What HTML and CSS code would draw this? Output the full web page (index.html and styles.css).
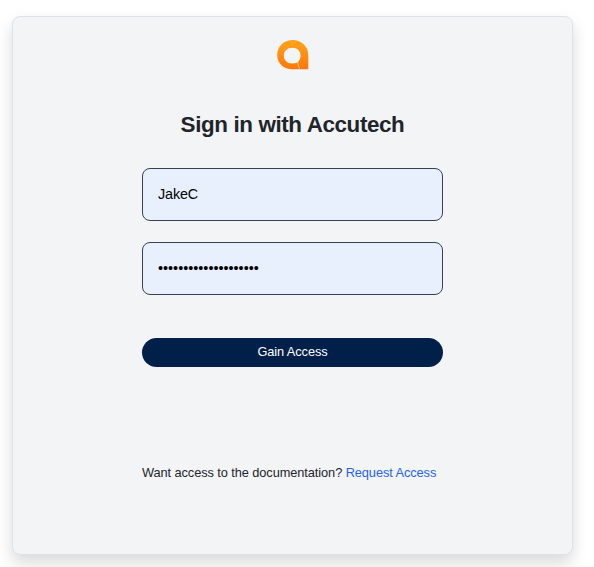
FILE: index.html
```html
<!DOCTYPE html>
<html lang="en">
<head>
<meta charset="utf-8">
<title>Sign in with Accutech</title>
<link rel="stylesheet" href="styles.css">
</head>
<body>
<main class="card">
  <svg class="logo" viewBox="0 0 32 30" role="img" aria-label="Accutech">
    <defs>
      <linearGradient id="flame" x1="0" y1="0" x2="0" y2="1">
        <stop offset="0" stop-color="#ffa51c"/>
        <stop offset="1" stop-color="#ff7608"/>
      </linearGradient>
    </defs>
    <path fill="url(#flame)" d="M15.500 0C6.800 0 .2 6.500 .2 15S6.700 29.300 15.500 29.300H31.300V15C31.300 6.300 24.200 0 15.500 0ZM15.300 7.800C20.200 7.800 23.600 11 23.600 15.500C23.600 18.500 22.500 20.500 21 22L21.400 23.200L20.200 22.600C18.800 23.200 17.200 23.600 15.400 23.600C10.300 23.600 6.800 20.200 6.800 15.600S10.300 7.800 15.300 7.800Z" fill-rule="evenodd"/>
    <path class="logo-slit" d="M20.700 22.500L22.500 29.300"/>
  </svg>
  <h1 class="title">Sign in with Accutech</h1>
  <form class="form">
    <input class="field" type="text" value="JakeC" aria-label="Username">
    <input class="field" type="password" value="aaaaaaaaaaaaaaaaaaaa" aria-label="Password">
    <button class="submit" type="button">Gain Access</button>
  </form>
  <p class="request">Want access to the documentation? <a class="link" href="#">Request Access</a></p>
</main>
</body>
</html>
```
FILE: styles.css
```css
* {
  box-sizing: border-box;
}

body {
  margin: 0;
  padding: 16px 21px 0 12px;
  height: 567px;
  overflow: hidden;
  background: #fff;
  color: #212529;
  font-family: "Liberation Sans", Arial, sans-serif;
}

.card {
  display: flex;
  flex-direction: column;
  align-items: center;
  height: 539px;
  padding-top: 23px;
  border: 1px solid #dee2e6;
  border-radius: 8px;
  background: #f3f4f6;
  box-shadow: 0 8px 16px rgba(0, 0, 0, 0.15);
}

.logo {
  width: 32px;
  height: 30px;
}

.logo-slit {
  stroke: #ffd9b0;
  stroke-width: 0.8;
}

.title {
  margin: 41px 0 0;
  font-size: 22.4px;
  line-height: 28px;
  font-weight: 700;
  letter-spacing: -0.38px;
}

.form {
  display: flex;
  flex-direction: column;
  width: 301px;
  margin-top: 29px;
}

.field {
  height: 53px;
  margin: 0 0 21px;
  padding: 0 15px 2px;
  border: 1px solid #374151;
  border-radius: 8px;
  background: #e8f0fe;
  color: #000;
  font-family: inherit;
  font-size: 14.4px;
}

.field[type="text"] {
  letter-spacing: -0.15px;
}

.submit {
  height: 29px;
  margin-top: 22px;
  padding: 0 0 2px;
  border: 0;
  border-radius: 15px;
  background: #00204a;
  color: #fff;
  font-family: inherit;
  font-size: 12.8px;
  letter-spacing: -0.1px;
}

.request {
  width: 301px;
  margin: 97px 0 0;
  font-size: 12.8px;
  line-height: 18px;
  letter-spacing: -0.085px;
}

.link {
  color: #2563eb;
  text-decoration: none;
}
```
